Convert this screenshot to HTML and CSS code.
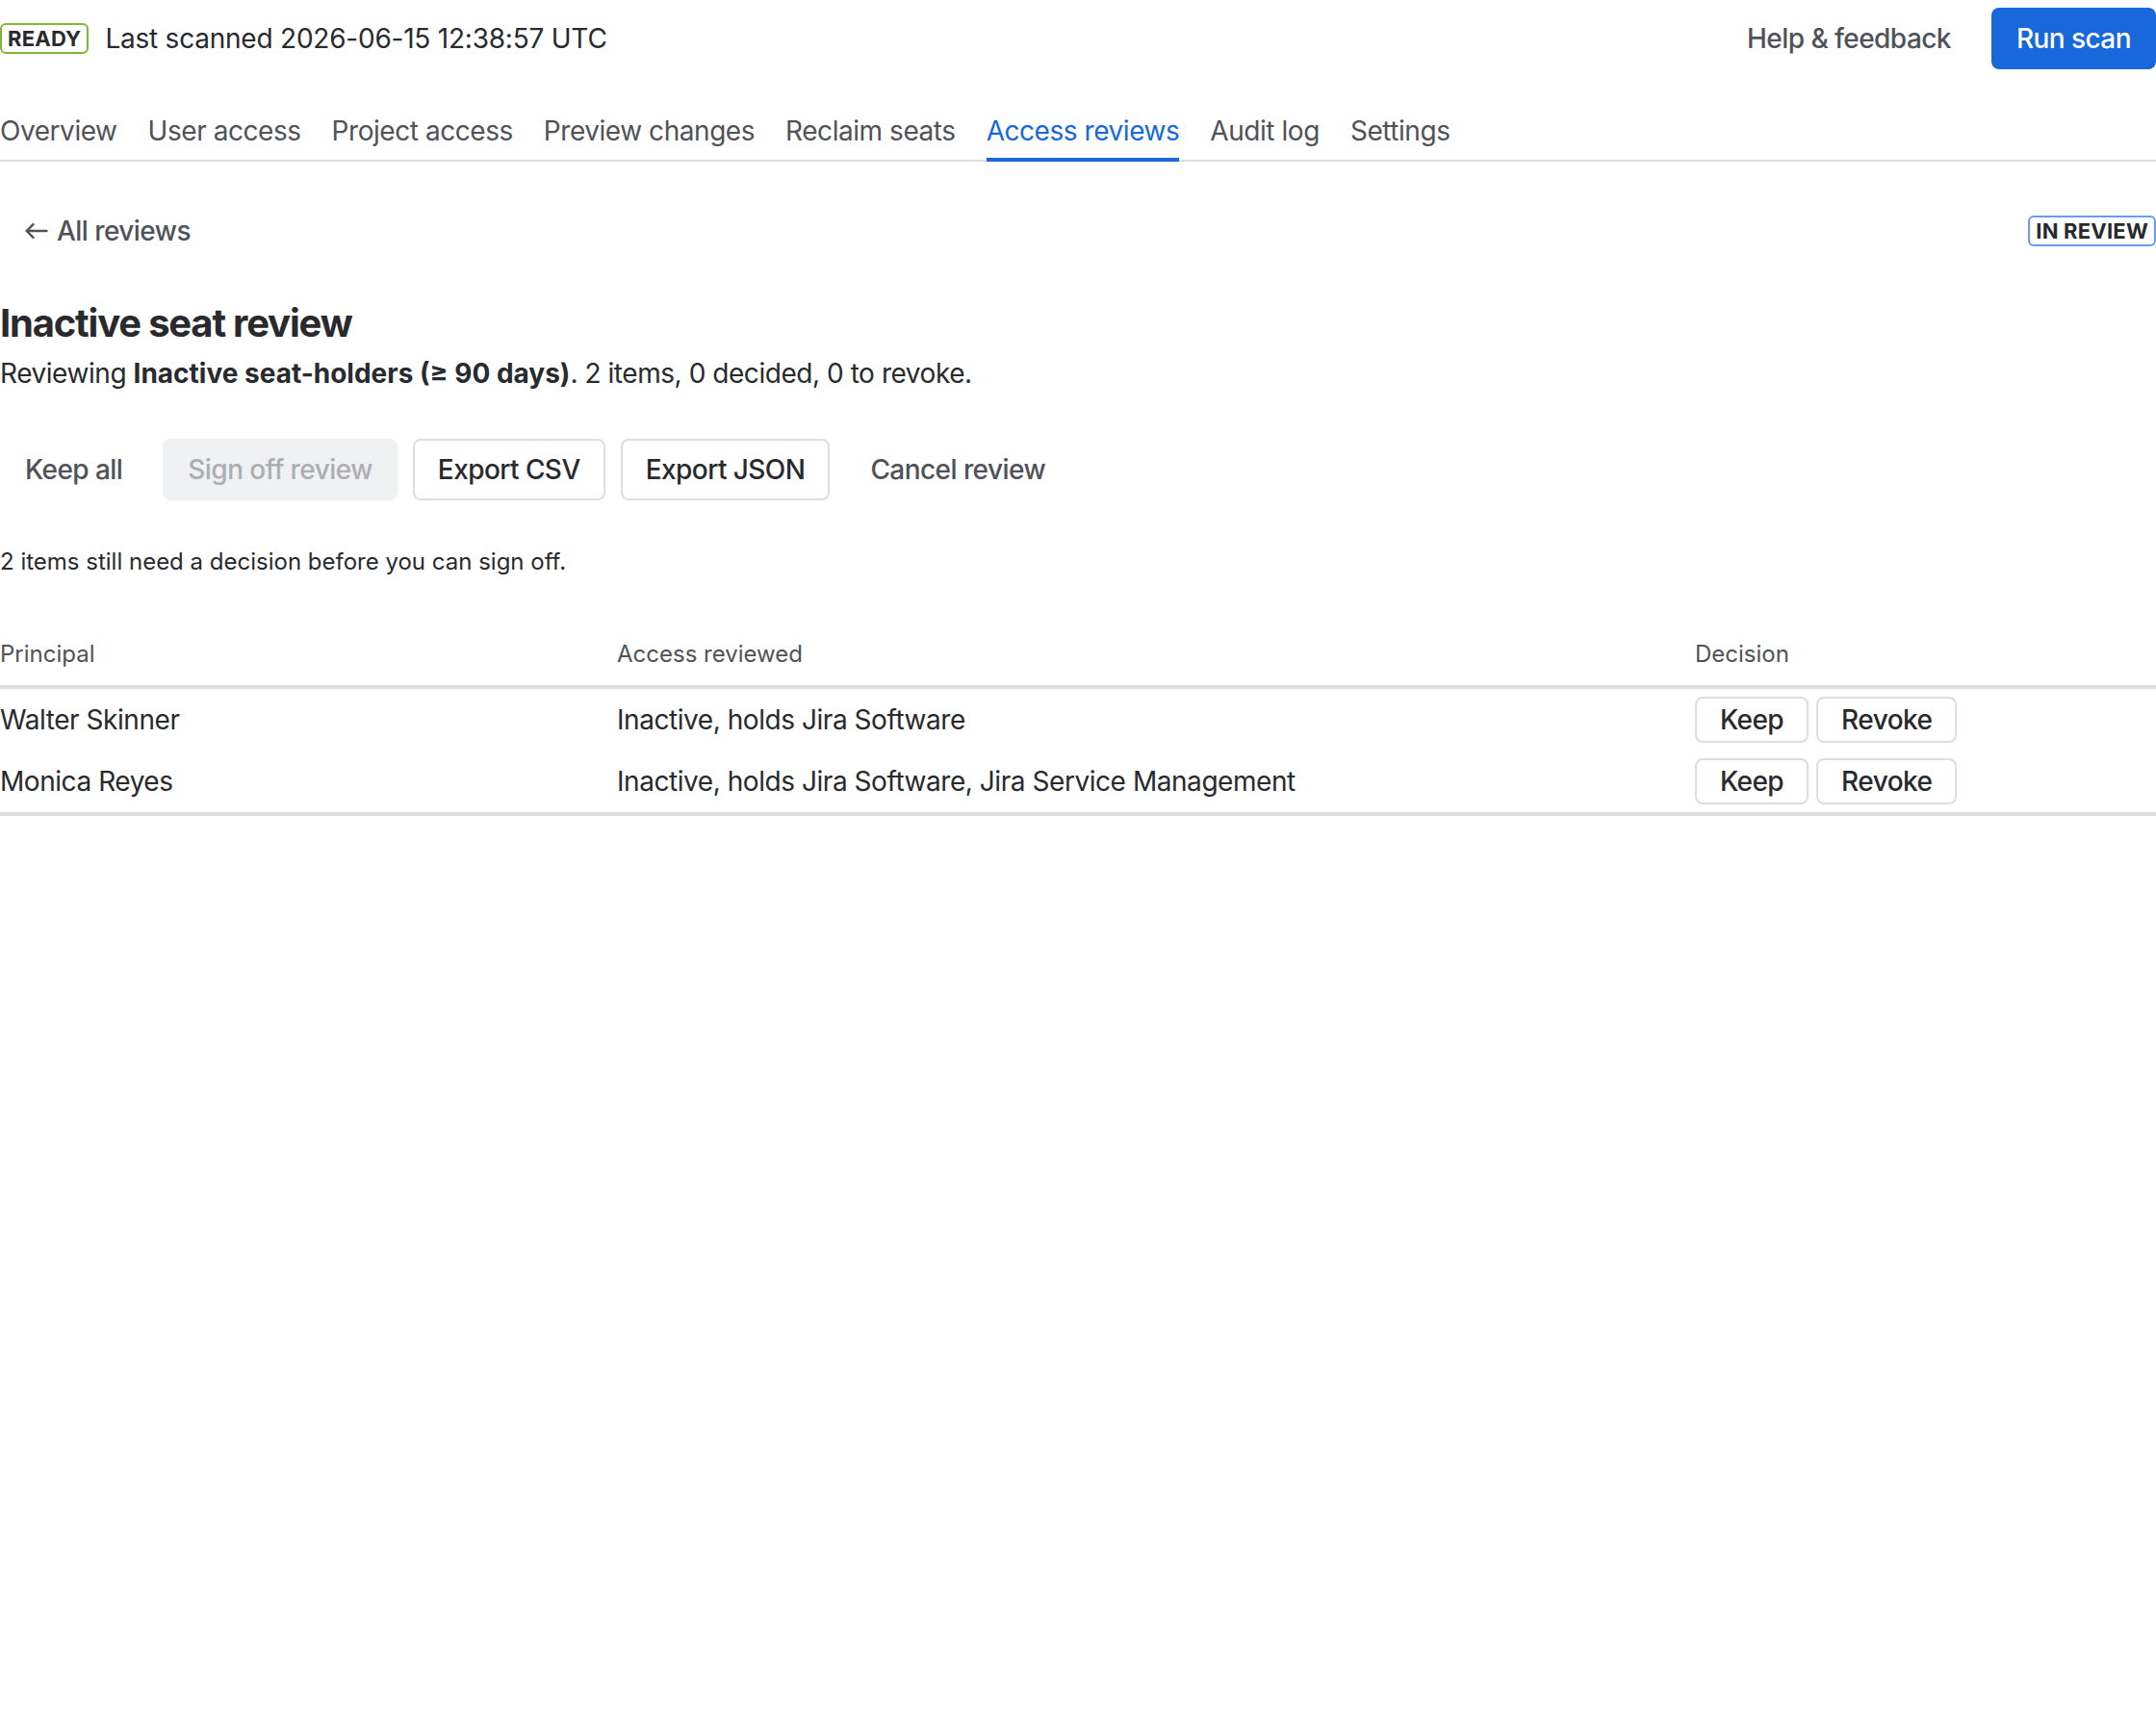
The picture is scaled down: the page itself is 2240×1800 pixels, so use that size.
FILE: index.html
```html
<!DOCTYPE html>
<html lang="en">
<head>
    <meta charset="UTF-8">
    <meta name="viewport" content="width=device-width, initial-scale=1.0">
    <title>Access reviews</title>
    <link rel="stylesheet" href="styles.css">
</head>
<body>
    <header class="topbar">
        <div class="status">
            <span class="lozenge lozenge-ready">Ready</span>
            <span class="scanned">Last scanned 2026-06-15 12:38:57 UTC</span>
        </div>
        <div class="actions">
            <button class="btn btn-subtle">Help &amp; feedback</button>
            <button class="btn btn-primary">Run scan</button>
        </div>
    </header>

    <nav class="tabs">
        <a href="#">Overview</a>
        <a href="#">User access</a>
        <a href="#">Project access</a>
        <a href="#">Preview changes</a>
        <a href="#">Reclaim seats</a>
        <a href="#" class="active">Access reviews</a>
        <a href="#">Audit log</a>
        <a href="#">Settings</a>
    </nav>

    <main class="review">
        <div class="back-row">
            <button class="btn btn-subtle back">
                <svg width="24" height="24" viewBox="0 0 24 24" fill="none" stroke="currentColor" stroke-width="2.4" stroke-linecap="round" stroke-linejoin="round">
                    <path d="M22.5 12H1.8"/>
                    <path d="M8.5 5.2L1.8 12L8.5 18.8"/>
                </svg>
                All reviews
            </button>
            <span class="lozenge lozenge-review">In review</span>
        </div>

        <h1>Inactive seat review</h1>
        <p class="summary">Reviewing <strong>Inactive seat-holders (≥ 90 days)</strong>. 2 items, 0 decided, 0 to revoke.</p>

        <div class="toolbar">
            <button class="btn btn-subtle">Keep all</button>
            <button class="btn btn-disabled" disabled>Sign off review</button>
            <button class="btn btn-default">Export CSV</button>
            <button class="btn btn-default">Export JSON</button>
            <button class="btn btn-subtle">Cancel review</button>
        </div>

        <p class="note">2 items still need a decision before you can sign off.</p>

        <table class="items">
            <thead>
                <tr>
                    <th class="col-principal">Principal</th>
                    <th class="col-access">Access reviewed</th>
                    <th class="col-decision">Decision</th>
                </tr>
            </thead>
            <tbody>
                <tr>
                    <td>Walter Skinner</td>
                    <td>Inactive, holds Jira Software</td>
                    <td>
                        <div class="decision">
                            <button class="btn btn-default btn-compact">Keep</button>
                            <button class="btn btn-default btn-compact">Revoke</button>
                        </div>
                    </td>
                </tr>
                <tr>
                    <td>Monica Reyes</td>
                    <td>Inactive, holds Jira Software, Jira Service Management</td>
                    <td>
                        <div class="decision">
                            <button class="btn btn-default btn-compact">Keep</button>
                            <button class="btn btn-default btn-compact">Revoke</button>
                        </div>
                    </td>
                </tr>
            </tbody>
        </table>
    </main>
</body>
</html>
```

FILE: styles.css
```css
* {
    padding: 0px;
    margin: 0px;
    box-sizing: border-box;
}

body {
    font-family: "Inter", "Noto Sans", sans-serif;
    font-size: 28px;
    line-height: 40px;
    letter-spacing: -0.016em;
    color: #292a2e;
    background-color: #ffffff;
}

/* buttons */
.btn {
    display: inline-flex;
    align-items: center;
    gap: 9px;
    height: 64px;
    padding: 0px 24px;
    border: 2px solid transparent;
    border-radius: 8px;
    font-family: inherit;
    font-size: 28px;
    font-weight: 500;
    letter-spacing: -0.02em;
    background: none;
    color: #292a2e;
    cursor: pointer;
    white-space: nowrap;
}

.btn-subtle {
    color: #505258;
}

.btn-subtle:hover {
    background-color: #f0f1f2;
}

.btn-primary {
    background-color: #1868db;
    color: #ffffff;
}

.btn-primary:hover {
    background-color: #1558bc;
}

.btn-default {
    border-color: #dddee1;
    background-color: #ffffff;
}

.btn-default:hover {
    background-color: #f7f8f9;
}

.btn-disabled {
    background-color: #f0f1f2;
    color: #acaeb2;
    cursor: not-allowed;
}

.btn-compact {
    height: 48px;
}

/* lozenges */
.lozenge {
    display: inline-block;
    padding: 0px 6px;
    border: 2px solid;
    border-radius: 6px;
    font-size: 22px;
    line-height: 28px;
    font-weight: 700;
    text-transform: uppercase;
    letter-spacing: 0.01em;
    color: #292a2e;
}

.lozenge-ready {
    border-color: #82b536;
}

.lozenge-review {
    border-color: #669df1;
}

/* top bar */
.topbar {
    height: 80px;
    display: flex;
    justify-content: space-between;
    align-items: center;
}

.status {
    display: flex;
    align-items: center;
    gap: 17px;
}

.scanned {
    letter-spacing: -0.008em;
}

.actions {
    display: flex;
    align-items: center;
    gap: 16px;
}

/* tabs */
.tabs {
    margin-top: 28px;
    display: flex;
    gap: 32px;
    border-bottom: 2px solid #dddee1;
}

.tabs a {
    padding: 8px 0px;
    margin-bottom: -2px;
    border-bottom: 4px solid transparent;
    color: #505258;
    text-decoration: none;
}

.tabs a.active {
    color: #1868db;
    border-bottom-color: #1868db;
}

/* review */
.back-row {
    margin-top: 40px;
    display: flex;
    justify-content: space-between;
    align-items: center;
}

.back {
    color: #505258;
}

h1 {
    margin-top: 40px;
    font-size: 40px;
    line-height: 48px;
    font-weight: 700;
    letter-spacing: -0.03em;
}

.summary {
    margin-top: 8px;
}

.summary strong {
    font-weight: 700;
    letter-spacing: 0px;
}

.toolbar {
    margin-top: 48px;
    display: flex;
    gap: 16px;
}

.note {
    margin-top: 48px;
    font-size: 24px;
    line-height: 32px;
    letter-spacing: 0px;
}

/* table */
.items {
    width: 100%;
    margin-top: 48px;
    border-collapse: collapse;
    table-layout: fixed;
}

.items th {
    padding: 16px 0px;
    font-size: 24px;
    line-height: 32px;
    font-weight: 400;
    letter-spacing: 0px;
    text-align: left;
    color: #505258;
    border-bottom: 4px solid #dddee1;
}

.col-principal {
    width: 641px;
}

.col-access {
    width: 1120px;
}

.items td {
    padding: 8px 0px;
    vertical-align: middle;
}

.items tbody {
    border-bottom: 4px solid #dddee1;
}

.decision {
    display: flex;
    gap: 8px;
}
```
